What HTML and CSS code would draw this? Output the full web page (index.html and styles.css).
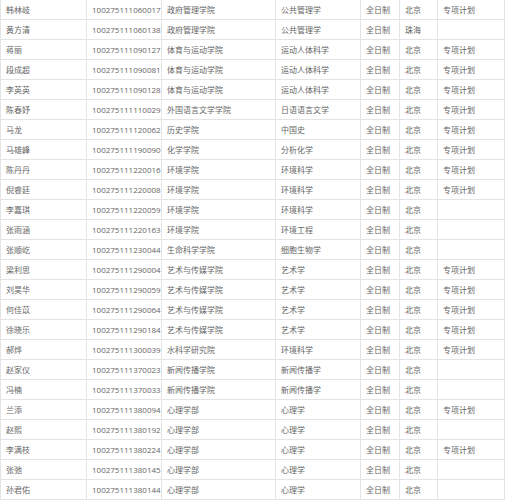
FILE: index.html
```html
<!DOCTYPE html>
<html>
<head>
<meta charset="utf-8">
<link rel="stylesheet" href="styles.css">
</head>
<body>
<table class="list">
<colgroup>
<col class="c-name"><col class="c-id"><col class="c-school"><col class="c-major"><col class="c-type"><col class="c-city"><col class="c-plan">
</colgroup>
<tbody>
<tr><td>韩林岐</td><td>100275111060017</td><td>政府管理学院</td><td>公共管理学</td><td>全日制</td><td>北京</td><td>专项计划</td></tr>
<tr><td>黄方清</td><td>100275111060138</td><td>政府管理学院</td><td>公共管理学</td><td>全日制</td><td>珠海</td><td></td></tr>
<tr><td>蒋丽</td><td>100275111090127</td><td>体育与运动学院</td><td>运动人体科学</td><td>全日制</td><td>北京</td><td>专项计划</td></tr>
<tr><td>段成超</td><td>100275111090081</td><td>体育与运动学院</td><td>运动人体科学</td><td>全日制</td><td>北京</td><td>专项计划</td></tr>
<tr><td>李英英</td><td>100275111090128</td><td>体育与运动学院</td><td>运动人体科学</td><td>全日制</td><td>北京</td><td>专项计划</td></tr>
<tr><td>陈春妤</td><td>100275111110029</td><td>外国语言文学学院</td><td>日语语言文学</td><td>全日制</td><td>北京</td><td>专项计划</td></tr>
<tr><td>马龙</td><td>100275111120062</td><td>历史学院</td><td>中国史</td><td>全日制</td><td>北京</td><td>专项计划</td></tr>
<tr><td>马雄峰</td><td>100275111190090</td><td>化学学院</td><td>分析化学</td><td>全日制</td><td>北京</td><td>专项计划</td></tr>
<tr><td>陈丹丹</td><td>100275111220016</td><td>环境学院</td><td>环境科学</td><td>全日制</td><td>北京</td><td>专项计划</td></tr>
<tr><td>倪睿廷</td><td>100275111220008</td><td>环境学院</td><td>环境科学</td><td>全日制</td><td>北京</td><td>专项计划</td></tr>
<tr><td>李嘉琪</td><td>100275111220059</td><td>环境学院</td><td>环境科学</td><td>全日制</td><td>北京</td><td></td></tr>
<tr><td>张雨涵</td><td>100275111220163</td><td>环境学院</td><td>环境工程</td><td>全日制</td><td>北京</td><td></td></tr>
<tr><td>张顺屹</td><td>100275111230044</td><td>生命科学学院</td><td>细胞生物学</td><td>全日制</td><td>北京</td><td></td></tr>
<tr><td>梁利思</td><td>100275111290004</td><td>艺术与传媒学院</td><td>艺术学</td><td>全日制</td><td>北京</td><td>专项计划</td></tr>
<tr><td>刘昊华</td><td>100275111290059</td><td>艺术与传媒学院</td><td>艺术学</td><td>全日制</td><td>北京</td><td>专项计划</td></tr>
<tr><td>何佳苡</td><td>100275111290064</td><td>艺术与传媒学院</td><td>艺术学</td><td>全日制</td><td>北京</td><td>专项计划</td></tr>
<tr><td>徐晓乐</td><td>100275111290184</td><td>艺术与传媒学院</td><td>艺术学</td><td>全日制</td><td>北京</td><td>专项计划</td></tr>
<tr><td>郝烨</td><td>100275111300039</td><td>水科学研究院</td><td>环境科学</td><td>全日制</td><td>北京</td><td>专项计划</td></tr>
<tr><td>赵家仪</td><td>100275111370023</td><td>新闻传播学院</td><td>新闻传播学</td><td>全日制</td><td>北京</td><td></td></tr>
<tr><td>冯楠</td><td>100275111370033</td><td>新闻传播学院</td><td>新闻传播学</td><td>全日制</td><td>北京</td><td></td></tr>
<tr><td>兰添</td><td>100275111380094</td><td>心理学部</td><td>心理学</td><td>全日制</td><td>北京</td><td>专项计划</td></tr>
<tr><td>赵熙</td><td>100275111380192</td><td>心理学部</td><td>心理学</td><td>全日制</td><td>北京</td><td></td></tr>
<tr><td>李满枝</td><td>100275111380224</td><td>心理学部</td><td>心理学</td><td>全日制</td><td>北京</td><td>专项计划</td></tr>
<tr><td>张弛</td><td>100275111380145</td><td>心理学部</td><td>心理学</td><td>全日制</td><td>北京</td><td></td></tr>
<tr><td>孙君佑</td><td>100275111380144</td><td>心理学部</td><td>心理学</td><td>全日制</td><td>北京</td><td></td></tr>
</tbody>
</table>
</body>
</html>
```
FILE: styles.css
```css
html, body {
  margin: 0;
  padding: 0;
  background: #ffffff;
}
.list {
  border-collapse: collapse;
  table-layout: fixed;
  width: 504px;
  margin-top: -1px;
  font-family: "Open Sans", "Noto Sans CJK SC", sans-serif;
  font-size: 8px;
  color: #666666;
}
.list td {
  border: 1px solid #e4e4e4;
  height: 19px;
  padding: 0 0 0 5px;
  line-height: 19px;
  white-space: nowrap;
  overflow: hidden;
  box-sizing: border-box;
  height: 20px;
}
.c-name { width: 86px; }
.c-id { width: 75px; }
.c-school { width: 114px; }
.c-major { width: 85px; }
.c-type { width: 39px; }
.c-city { width: 38px; }
.c-plan { width: 67px; }
```
